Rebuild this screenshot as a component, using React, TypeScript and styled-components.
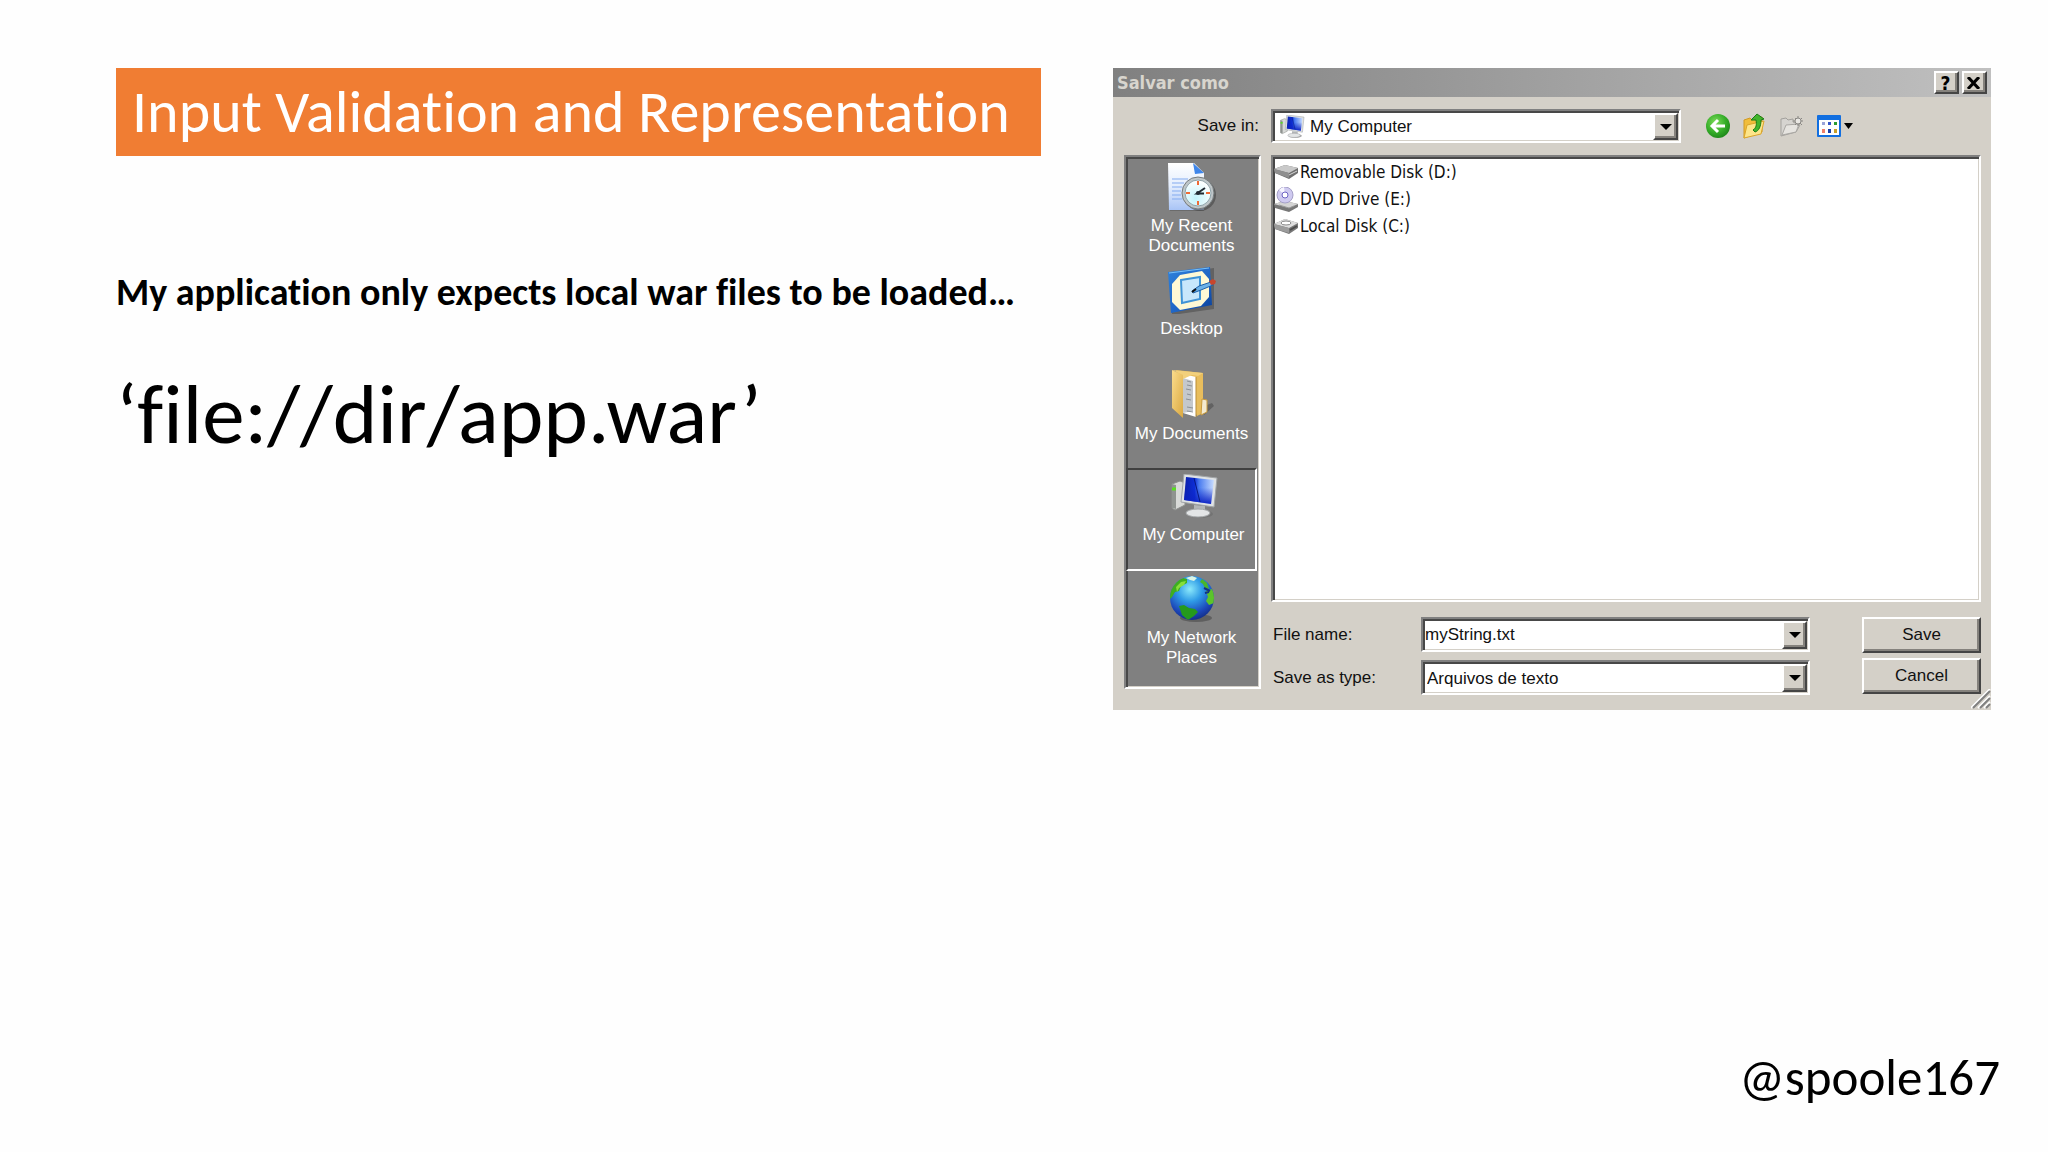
import React, { useState } from "react";
import styled, { createGlobalStyle, css } from "styled-components";

const slideFont = 'Carlito, Calibri, "Lato", sans-serif';
const uiFont = '"Liberation Sans", Arial, sans-serif';
const listFont = '"DejaVu Sans Condensed", "Noto Sans", sans-serif';

const GlobalStyle = createGlobalStyle`
  *, *::before, *::after { box-sizing: border-box; }
  body {
    margin: 0;
    background: #fefefe;
    color: #000;
    font-family: ${slideFont};
    font-variant-ligatures: none;
  }
`;

const Slide = styled.main`
  min-height: 100vh;
  display: flex;
  flex-direction: column;
  justify-content: space-between;
  padding: 68px 48px 44px 116px;
`;

const Columns = styled.div`
  display: grid;
  grid-template-columns: minmax(0, 925fr) minmax(0, 878fr);
  gap: 72px;
  align-items: start;
  padding-right: 9px;
`;

const Title = styled.h1`
  margin: 0 0 112px;
  padding: 0 16px;
  background: #f07d33;
  color: #fff;
  font-size: 60px;
  font-weight: 400;
  line-height: 88px;
  white-space: nowrap;
`;

const Lead = styled.p`
  margin: 0 0 50px;
  font-size: 38px;
  font-weight: 700;
  line-height: 48px;
  white-space: nowrap;
`;

const Url = styled.p`
  margin: 0;
  font-size: 85px;
  line-height: 96px;
  white-space: nowrap;
`;

const Handle = styled.footer`
  align-self: flex-end;
  font-size: 51px;
  line-height: 60px;
`;

const raised = css`
  border: 2px solid;
  border-color: #fff #454545 #454545 #fff;
  box-shadow: inset -2px -2px #85827d;
  background: #d4d0c8;
`;

const sunken = css`
  border: 2px solid;
  border-color: #808080 #fff #fff #808080;
  box-shadow: inset 2px 2px #484848, inset -1px -1px #d4d0c8;
`;

const Dialog = styled.section`
  background: #d4d0c8;
  font-family: ${uiFont};
  font-size: 17px;
  color: #111;
`;

const TitleBar = styled.header`
  display: flex;
  align-items: center;
  gap: 3px;
  height: 29px;
  padding: 0 4px;
  background: linear-gradient(90deg, #808080, #c0c0c0);
`;

const DialogTitle = styled.h2`
  flex: 1;
  margin: 0;
  color: #d8d5ce;
  font: 700 18px ${listFont};
`;

const CaptionButton = styled.button`
  ${raised}
  display: grid;
  place-items: center;
  width: 25px;
  height: 23px;
  padding: 0 2px 0 0;
  color: #000;
  font: 700 19px/18px ${listFont};
`;

const Body = styled.div`
  position: relative;
  display: grid;
  grid-template-columns: 137px minmax(0, 1fr);
  grid-template-rows: 34px 447px auto;
  column-gap: 10px;
  row-gap: 12px;
  padding: 12px 10px 15px 11px;
`;

const SaveInLabel = styled.label`
  justify-self: end;
  align-self: center;
  padding-right: 2px;
`;

const Toolbar = styled.div`
  display: flex;
  align-items: center;
`;

const Combo = styled.div<{ $width: number; $height: number }>`
  ${sunken}
  position: relative;
  display: flex;
  align-items: center;
  flex: 0 1 ${(p) => p.$width}px;
  height: ${(p) => p.$height}px;
  padding: 2px 1px 1px 2px;
  background: #fff;
`;

const ComboIcon = styled.span`
  display: flex;
  padding-left: 4px;
`;

const fieldText = css`
  flex: 1;
  min-width: 0;
  height: 100%;
  border: 0;
  outline: 0;
  background: transparent;
  color: #111;
  font: 17px ${uiFont};
`;

const Select = styled.select<{ $indent: number }>`
  ${fieldText}
  appearance: none;
  padding: 0 28px 0 ${(p) => p.$indent}px;
`;

const Input = styled.input`
  ${fieldText}
  padding: 0 28px 0 0;
`;

const DropMark = styled.span`
  ${raised}
  position: absolute;
  top: 2px;
  right: 1px;
  bottom: 1px;
  width: 25px;
  display: grid;
  place-items: center;
  pointer-events: none;
`;

const Tools = styled.div`
  display: flex;
  align-items: center;
  gap: 13px;
  margin-left: 25px;
`;

const ToolButton = styled.button`
  display: flex;
  align-items: center;
  gap: 3px;
  padding: 0;
  border: 0;
  background: none;
`;

const Places = styled.nav`
  ${sunken}
  grid-row: 2 / 4;
  align-self: start;
  height: 534px;
  padding: 2px 2px 1px 0;
  background: #808080;
`;

const Place = styled.button<{ $active: boolean }>`
  display: flex;
  flex-direction: column;
  align-items: center;
  gap: 5px;
  width: 100%;
  height: 103px;
  padding: ${(p) => (p.$active ? "4px 0 0 4px" : "2px 0 0")};
  border: 2px solid;
  border-color: ${(p) => (p.$active ? "#404040 #fff #fff #404040" : "transparent")};
  background: none;
  color: #fff;
  font: 17px/20px ${uiFont};
  white-space: pre-line;
`;

const FileList = styled.ul`
  ${sunken}
  margin: 0;
  padding: 2px 1px;
  list-style: none;
  background: #fff;
  font: 17px/27px ${listFont};
`;

const FileItem = styled.li`
  display: flex;
  align-items: center;
  gap: 1px;
`;

const Bottom = styled.div`
  display: flex;
  justify-content: space-between;
  padding-top: 3px;
`;

const Fields = styled.div`
  flex: 0 1 539px;
  display: grid;
  grid-template-columns: 150px minmax(0, 1fr);
  row-gap: 8px;
  align-items: center;
  align-content: start;
`;

const FieldLabel = styled.label`
  padding-left: 2px;
`;

const Actions = styled.div`
  display: flex;
  flex-direction: column;
  gap: 5px;
`;

const PushButton = styled.button`
  ${raised}
  width: 119px;
  height: 36px;
  padding: 0;
  color: #111;
  font: 17px ${uiFont};
`;

const Grip = styled.svg`
  position: absolute;
  right: 0;
  bottom: 1px;
`;

function Arrow({ width }: { width: number }) {
  return (
    <svg width={width} height="6" viewBox="0 0 12 6" preserveAspectRatio="none" aria-hidden="true">
      <path d="M0 0h12L6 6z" fill="#000" />
    </svg>
  );
}

function RecentIcon() {
  return (
    <svg width="48" height="48" viewBox="0 0 48 48" aria-hidden="true">
      <defs>
        <linearGradient id="page" x1="0" y1="0" x2="0" y2="1">
          <stop offset="0" stopColor="#fff" />
          <stop offset="0.500" stopColor="#e3edfd" />
          <stop offset="1" stopColor="#a9c4f6" />
        </linearGradient>
        <radialGradient id="face" cx="0.400" cy="0.700" r="0.700">
          <stop offset="0" stopColor="#c2f3fb" />
          <stop offset="1" stopColor="#fff" />
        </radialGradient>
      </defs>
      <path d="M2 1h24l10 10v37H2z" fill="#555" opacity="0.500" />
      <path d="M0 0h26l10 10v37H1z" fill="url(#page)" />
      <path d="M25 0l11 10-9 1z" fill="#3f86ea" />
      <path d="M4 16h16M4 20h12M4 24h10M4 28h9M4 32h9M4 36h10" stroke="#83abf0" />
      <circle cx="32" cy="32" r="16" fill="#444" opacity="0.600" />
      <circle cx="30" cy="30" r="16" fill="#bfc6c9" stroke="#757b7d" />
      <circle cx="30" cy="30" r="13" fill="url(#face)" stroke="#8ea3aa" />
      <path d="M30 18v4M30 38v4M18 30h4M38 30h4" stroke="#ef6a35" strokeWidth="2" />
      <path d="M37 25l-8 5.500h7" fill="none" stroke="#222b33" strokeWidth="2" />
      <circle cx="30" cy="30" r="2" fill="#222b33" />
    </svg>
  );
}

function DesktopIcon() {
  return (
    <svg width="48" height="48" viewBox="0 0 48 48" aria-hidden="true">
      <defs>
        <linearGradient id="desk" x1="0" y1="0" x2="1" y2="1">
          <stop offset="0" stopColor="#2f82dc" />
          <stop offset="0.600" stopColor="#1d63c4" />
          <stop offset="1" stopColor="#0a3f97" />
        </linearGradient>
      </defs>
      <path d="M3 8l43-6v41L4 49z" fill="#444" opacity="0.500" />
      <path d="M0 6l42-5 2 38-41 8z" fill="url(#desk)" />
      <path d="M1 7l40-5" stroke="#79c0f7" />
      <path d="M12 9l22-4 7 8v18l-8 9-21 4-8-8V18z" fill="#fff9d5" />
      <path d="M13 14l19-3v22l-18 4z" fill="#c8e7fb" stroke="#3f93d6" strokeWidth="2" />
      <path d="M24 25l7-5 12-4 2 3-12 5-8 3z" fill="#6bb1e8" stroke="#1d5fa8" />
      <path d="M24 26l4-3" stroke="#111" strokeWidth="2" />
      <path d="M41 15l4-2 3 2-1 3-4 1z" fill="#c7452c" />
    </svg>
  );
}

function DocumentsIcon() {
  return (
    <svg width="48" height="50" viewBox="0 0 48 50" aria-hidden="true">
      <defs>
        <linearGradient id="flap" x1="0" y1="0" x2="1" y2="1">
          <stop offset="0" stopColor="#fbdc8c" />
          <stop offset="1" stopColor="#dba941" />
        </linearGradient>
      </defs>
      <path d="M36 46l10-9-2-3-10 4z" fill="#444" opacity="0.500" />
      <path d="M8 1l27 3v40l-6 3z" fill="#e8bd5c" />
      <path d="M34 30l5 1v12l-6 3z" fill="#f3ead0" stroke="#c99b3c" />
      <path d="M15 5l13 3v40l-13-4z" fill="#fff" />
      <path d="M15 9l10 3v30l-10 2z" fill="#c4c8cc" />
      <path d="M19 12l4 1M19 16l5 1M18 20l5 1M19 25l4 1M18 30l5 1M19 38l6 1M19 42l6 1" stroke="#8b9197" />
      <path d="M28 8v40" stroke="#b98d36" />
      <path d="M4 1l11 5v43L4 39z" fill="url(#flap)" />
      <path d="M4 1l11 5v4L24 6l6 1 5-3z" fill="#f2d07c" />
    </svg>
  );
}

function ComputerIcon({ width, height }: { width: number; height: number }) {
  return (
    <svg width={width} height={height} viewBox="0 0 48 46" aria-hidden="true">
      <defs>
        <linearGradient id="screen" x1="0" y1="0" x2="1" y2="0">
          <stop offset="0" stopColor="#0b1fa8" />
          <stop offset="0.350" stopColor="#0d2ed6" />
          <stop offset="0.500" stopColor="#4a7cf0" />
          <stop offset="1" stopColor="#c8dcff" />
        </linearGradient>
        <linearGradient id="glass" x1="0" y1="0" x2="0" y2="1">
          <stop offset="0.400" stopColor="#0c22c4" stopOpacity="0" />
          <stop offset="1" stopColor="#0c22c4" />
        </linearGradient>
      </defs>
      <path d="M2 10l8-3 5 2v22l-10 5-3-2z" fill="#d8dad8" stroke="#8c8f8c" />
      <path d="M2 10l4 1v24l-4-1z" fill="#8f9390" />
      <path d="M2 15h4" stroke="#58e01f" strokeWidth="3" />
      <path d="M24 31l11 1v6H24z" fill="#b3b6b8" />
      <ellipse cx="30" cy="40" rx="13" ry="4" fill="#6a6a6a" opacity="0.600" />
      <ellipse cx="28" cy="39" rx="12" ry="4" fill="#e3e5e6" stroke="#a4a7a9" />
      <path d="M14 0l33 4-3 29-33-5z" fill="#dfe2e4" stroke="#a1a5a7" />
      <path d="M16 3l28 3-3 24-27-4z" fill="url(#screen)" />
      <path d="M16 3l28 3-3 24-27-4z" fill="url(#glass)" />
      <path d="M24 4l6 24" stroke="#061780" strokeWidth="1" />
    </svg>
  );
}

function NetworkIcon() {
  return (
    <svg width="48" height="48" viewBox="0 0 48 48" aria-hidden="true">
      <defs>
        <radialGradient id="sea" cx="0.450" cy="0.300" r="0.700">
          <stop offset="0" stopColor="#8be9fb" />
          <stop offset="0.400" stopColor="#2f9be6" />
          <stop offset="0.800" stopColor="#1c46b8" />
          <stop offset="1" stopColor="#14308a" />
        </radialGradient>
        <clipPath id="ball"><circle cx="24" cy="23" r="22" /></clipPath>
      </defs>
      <ellipse cx="28" cy="43" rx="16" ry="4" fill="#4a4a4a" opacity="0.600" />
      <circle cx="24" cy="23" r="22" fill="url(#sea)" />
      <g clipPath="url(#ball)">
        <path d="M0 26l4-4 3-5 4-1 2-5 6-3V4l-4-1-8 3-7 9z" fill="#3fae1e" />
        <path d="M8 12l5-5 5-1-2 4-5 3-2 4z" fill="#86df3a" />
        <path d="M18 3l6-2 5 2-3 3-4-1z" fill="#d9f4e6" />
        <path d="M34 4l5 4 2 6-4-1-2-4-3-2z" fill="#49b52a" />
        <path d="M38 16l6-2 3 6-1 8-5 2-3-4 2-4z" fill="#5cc42a" />
        <path d="M11 31l5-1 5 3 6 1 3 3-4 4-6 4-6-5z" fill="#259a1c" />
        <path d="M36 13l6 3M37 18l4-1" stroke="#123283" strokeWidth="2" />
      </g>
    </svg>
  );
}

function RemovableIcon() {
  return (
    <svg width="25" height="18" viewBox="0 0 25 18" aria-hidden="true">
      <path d="M0 5l11-4 13 3v5l-9 6L1 9z" fill="#6f6f6f" />
      <path d="M0 5l11-4 13 3-9 5z" fill="#c9c9c9" />
      <path d="M0 5l15 4v5L1 9z" fill="#8f8f8f" />
      <path d="M15 11l8-4" stroke="#d9d9d9" />
    </svg>
  );
}

function DvdIcon() {
  return (
    <svg width="25" height="25" viewBox="0 0 25 25" aria-hidden="true">
      <path d="M0 17l11-3 13 3v3l-9 5-14-4z" fill="#777" />
      <path d="M0 17l11-3 13 3-9 4z" fill="#d4d4d4" />
      <path d="M5 18l10 3 5-2" fill="none" stroke="#999" />
      <circle cx="11" cy="8" r="8" fill="#cfcaf0" stroke="#a5a0c8" />
      <path d="M11 8L5 3a8 8 0 0 1 5-3z" fill="#f6f5ff" />
      <circle cx="11" cy="8" r="3" fill="#fff" stroke="#6d63c4" />
    </svg>
  );
}

function DiskIcon() {
  return (
    <svg width="25" height="18" viewBox="0 0 25 18" aria-hidden="true">
      <path d="M0 6l11-5 13 4v5l-9 6-14-5z" fill="#777" />
      <path d="M0 6l11-5 13 4-9 5z" fill="#dedede" />
      <path d="M0 6l15 4v5L1 11z" fill="#9c9c9c" />
      <ellipse cx="12" cy="5" rx="5" ry="2" fill="#fff" stroke="#888" />
      <path d="M16 12l7-4" stroke="#4b4b4b" strokeWidth="2" />
    </svg>
  );
}

function BackIcon() {
  return (
    <svg width="24" height="24" viewBox="0 0 24 24" aria-hidden="true">
      <defs>
        <radialGradient id="green" cx="0.400" cy="0.350" r="0.700">
          <stop offset="0" stopColor="#7fdd5c" />
          <stop offset="0.600" stopColor="#35ad28" />
          <stop offset="1" stopColor="#1c8419" />
        </radialGradient>
      </defs>
      <circle cx="12" cy="12" r="12" fill="url(#green)" />
      <path d="M12 6l-6 6 6 6M7 12h12" fill="none" stroke="#fff" strokeWidth="3" />
    </svg>
  );
}

function UpIcon() {
  return (
    <svg width="24" height="26" viewBox="0 0 24 26" aria-hidden="true">
      <path d="M1 7l6-2 2 2 10-3v15L1 25z" fill="#f1bd3a" stroke="#d19a22" />
      <path d="M4 12l17-4-3 13L1 25z" fill="#fde58a" stroke="#dba52a" />
      <path d="M8 7l6-6 7 5-3 1c0 6-2 11-6 12l-2-2c3-2 4-5 3-10z" fill="#42b52c" stroke="#1c7a18" />
    </svg>
  );
}

function NewFolderIcon() {
  return (
    <svg width="24" height="22" viewBox="0 0 24 22" aria-hidden="true">
      <path d="M1 4l5-1 2 2 5-1v3l7 3-4 7-15 4z" fill="#d6d4d0" stroke="#a3a19d" />
      <path d="M2 20l4-10 13-1-3 8z" fill="#e6e4e0" stroke="#aaa8a4" />
      <path d="M18 1v10M13 6h10M15 3l7 7M22 3l-7 7" stroke="#8a8884" />
      <circle cx="18" cy="6" r="3" fill="#e9e7e3" stroke="#8a8884" />
    </svg>
  );
}

function ViewsIcon() {
  return (
    <svg width="24" height="22" viewBox="0 0 24 22" aria-hidden="true">
      <rect width="24" height="22" rx="1" fill="#126fe0" />
      <rect x="2" y="5" width="20" height="15" fill="#fff" />
      <path d="M5 7h3v3H5z" fill="#9aa3d8" />
      <path d="M11 7h3v3h-3z" fill="#3455c8" />
      <path d="M17 7h3v3h-3z" fill="#2c9c32" />
      <path d="M5 14h3v4H5z" fill="#f0806a" />
      <path d="M11 14h3v4h-3z" fill="#1d3fa8" />
      <path d="M17 14h3v4h-3z" fill="#c9a02a" />
    </svg>
  );
}

const places = [
  { label: "My Recent\nDocuments", icon: <RecentIcon /> },
  { label: "Desktop", icon: <DesktopIcon /> },
  { label: "My Documents", icon: <DocumentsIcon /> },
  { label: "My Computer", icon: <ComputerIcon width={48} height={46} /> },
  { label: "My Network\nPlaces", icon: <NetworkIcon /> },
];

const drives = [
  { label: "Removable Disk (D:)", icon: <RemovableIcon /> },
  { label: "DVD Drive (E:)", icon: <DvdIcon /> },
  { label: "Local Disk (C:)", icon: <DiskIcon /> },
];

export default function App() {
  const [fileName, setFileName] = useState("myString.txt");
  const [place, setPlace] = useState("My Computer");

  return (
    <>
      <GlobalStyle />
      <Slide>
        <Columns>
          <div>
            <Title>Input Validation and Representation</Title>
            <Lead>My application only expects local war files to be loaded…</Lead>
            <Url>‘file://dir/app.war’</Url>
          </div>

          <Dialog aria-labelledby="dialog-title">
            <TitleBar>
              <DialogTitle id="dialog-title">Salvar como</DialogTitle>
              <CaptionButton type="button">?</CaptionButton>
              <CaptionButton type="button" aria-label="Close">
                <svg width="13" height="12" viewBox="0 0 13 12" aria-hidden="true">
                  <path d="M1 0l11 12M12 0L1 12" stroke="#000" strokeWidth="3" />
                </svg>
              </CaptionButton>
            </TitleBar>

            <Body>
              <SaveInLabel htmlFor="save-in">Save in:</SaveInLabel>
              <Toolbar>
                <Combo $width={410} $height={34}>
                  <ComboIcon>
                    <ComputerIcon width={26} height={24} />
                  </ComboIcon>
                  <Select id="save-in" $indent={5}>
                    <option>My Computer</option>
                  </Select>
                  <DropMark>
                    <Arrow width={12} />
                  </DropMark>
                </Combo>
                <Tools>
                  <ToolButton type="button" aria-label="Back">
                    <BackIcon />
                  </ToolButton>
                  <ToolButton type="button" aria-label="Up one level">
                    <UpIcon />
                  </ToolButton>
                  <ToolButton type="button" aria-label="New folder">
                    <NewFolderIcon />
                  </ToolButton>
                  <ToolButton type="button" aria-label="Views">
                    <ViewsIcon />
                    <Arrow width={9} />
                  </ToolButton>
                </Tools>
              </Toolbar>

              <Places>
                {places.map((p) => {
                  const active = p.label === place;
                  return (
                    <Place
                      key={p.label}
                      type="button"
                      $active={active}
                      aria-pressed={active}
                      onClick={() => setPlace(p.label)}
                    >
                      {p.icon}
                      <span>{p.label}</span>
                    </Place>
                  );
                })}
              </Places>

              <FileList>
                {drives.map((d) => (
                  <FileItem key={d.label}>
                    {d.icon}
                    <span>{d.label}</span>
                  </FileItem>
                ))}
              </FileList>

              <Bottom>
                <Fields>
                  <FieldLabel htmlFor="file-name">File name:</FieldLabel>
                  <Combo $width={388} $height={35}>
                    <Input
                      id="file-name"
                      value={fileName}
                      onChange={(e) => setFileName(e.target.value)}
                    />
                    <DropMark>
                      <Arrow width={12} />
                    </DropMark>
                  </Combo>
                  <FieldLabel htmlFor="file-type">Save as type:</FieldLabel>
                  <Combo $width={388} $height={35}>
                    <Select id="file-type" $indent={2}>
                      <option>Arquivos de texto</option>
                    </Select>
                    <DropMark>
                      <Arrow width={12} />
                    </DropMark>
                  </Combo>
                </Fields>
                <Actions>
                  <PushButton type="button">Save</PushButton>
                  <PushButton type="button">Cancel</PushButton>
                </Actions>
              </Bottom>

              <Grip width="20" height="20" viewBox="0 0 20 20" aria-hidden="true">
                <path d="M0 19L19 0M7 19L19 7M13 19l6-6" stroke="#fff" strokeWidth="2" />
                <path d="M2 19L19 2M9 19L19 9M15 19l4-4" stroke="#808080" strokeWidth="2" />
              </Grip>
            </Body>
          </Dialog>
        </Columns>
        <Handle>@spoole167</Handle>
      </Slide>
    </>
  );
}
